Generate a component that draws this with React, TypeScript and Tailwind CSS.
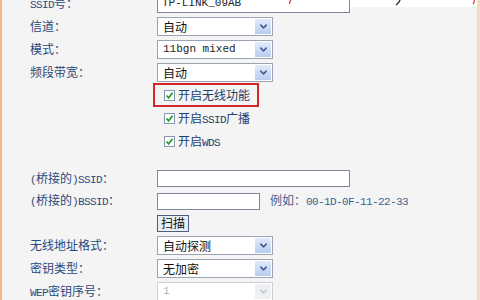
import { ChevronDown } from "lucide-react";

const cjk = { fontFamily: '"Noto Sans CJK SC", "Liberation Sans", sans-serif' };
const mono = { fontFamily: '"Liberation Mono", "DejaVu Sans Mono", monospace' };

// 半角字符按宋体宽度（约6px）显示
function Mixed({ text }: { text: string }) {
  const parts = text.match(/[\x20-\x7e]+|[^\x20-\x7e]+/g) || [];
  return (
    <>
      {parts.map((p, i) =>
        /^[\x20-\x7e]+$/.test(p) ? (
          <span key={i} className="text-[11px] tracking-[-0.6px]" style={mono}>
            {p}
          </span>
        ) : (
          <span key={i} style={cjk}>
            {p}
          </span>
        )
      )}
    </>
  );
}

function Label({ text }: { text: string }) {
  return (
    <div className="w-[127px] shrink-0 whitespace-nowrap text-[12px] text-[#2a4a7c]">
      <Mixed text={text} />
    </div>
  );
}

function Select({ value, disabled, latin }: { value: string; disabled?: boolean; latin?: boolean }) {
  return (
    <div
      className={
        "flex h-[19px] w-[116px] items-center border bg-white pl-[5px] pr-[1px] " +
        (disabled ? "border-[#cdd1d7]" : "border-[#9aa4b2]")
      }
    >
      <span
        className={
          "flex-1 truncate leading-none " +
          (disabled ? "text-[11px] text-[#b0b0b0]" : latin ? "text-[11px] text-[#222]" : "text-[12px] text-[#111]")
        }
        style={latin || disabled ? mono : cjk}
      >
        {value}
      </span>
      <span
        className={
          "flex h-[15px] w-[16px] items-center justify-center " +
          (disabled ? "bg-[#eef0f3]" : "bg-gradient-to-b from-[#e2ebfa] to-[#b9cbee]")
        }
      >
        <ChevronDown size={11} strokeWidth={3.2} className={disabled ? "text-[#c4c8ce]" : "text-[#3f5c8c]"} />
      </span>
    </div>
  );
}

function Input({ value, w }: { value?: string; w: string }) {
  return (
    <div
      className={"flex h-[17px] items-center border border-[#7d8898] bg-white px-[4px] text-[11px] leading-none text-[#222] " + w}
      style={mono}
    >
      {value}
    </div>
  );
}

function Check({ text }: { text: string }) {
  return (
    <div className="flex items-center gap-[3px]">
      <span className="flex h-[11px] w-[11px] items-center justify-center border border-[#8696b0] bg-white">
        <svg width="9" height="9" viewBox="0 0 9 9">
          <path d="M1.5 4.5 L3.6 6.8 L7.6 1.8" fill="none" stroke="#23a32a" strokeWidth="1.8" />
        </svg>
      </span>
      <span className="whitespace-nowrap text-[12px] leading-none text-[#1e3c6c]">
        <Mixed text={text} />
      </span>
    </div>
  );
}

export default function App() {
  return (
    <div className="relative h-[300px] w-[480px] overflow-hidden border-l-[2px] border-r-[3px] border-l-[#f5bb82] border-r-[#f7dcc2] bg-[#f4f4f4]">
      {/* 顶部注释残边 */}
      <div className="absolute left-[348px] top-0 h-[7px] w-[127px] bg-white" />
      <svg className="absolute left-0 top-0" width="480" height="6" viewBox="0 0 480 6">
        <path d="M289 0 Q287 2 288 4" fill="none" stroke="#d8353a" strokeWidth="1.2" />
        <path d="M398 0 Q397 3 394 5" fill="none" stroke="#333" strokeWidth="1.4" />
        <path d="M472 0 Q473 2 471 4" fill="none" stroke="#d8353a" strokeWidth="1.2" />
      </svg>

      <div className="flex flex-col pl-[28px]">
        <div className="-mt-[8px] flex h-[23px] items-center">
          <Label text="SSID号：" />
          <Input value="TP-LINK_09AB" w="w-[193px] h-[19px]" />
        </div>
        <div className="flex h-[23px] items-center">
          <Label text="信道：" />
          <Select value="自动" />
        </div>
        <div className="flex h-[23px] items-center">
          <Label text="模式：" />
          <Select value="11bgn mixed" latin />
        </div>
        <div className="flex h-[23px] items-center">
          <Label text="频段带宽：" />
          <Select value="自动" />
        </div>

        <div className="ml-[123px] mt-[-1px] flex h-[24px] w-[106px] items-center border-2 border-[#d3262c] pl-[9px]">
          <Check text="开启无线功能" />
        </div>
        <div className="ml-[134px] flex h-[23px] items-center">
          <Check text="开启SSID广播" />
        </div>
        <div className="ml-[134px] flex h-[23px] items-center">
          <Check text="开启WDS" />
        </div>

        <div className="mt-[14px] flex h-[23px] items-center">
          <Label text="(桥接的)SSID：" />
          <Input w="w-[193px]" />
        </div>
        <div className="flex h-[22px] items-center">
          <Label text="(桥接的)BSSID：" />
          <Input w="w-[103px]" />
          <span className="ml-[10px] whitespace-nowrap text-[12px] text-[#3d5f94]">
            <Mixed text="例如：00-1D-0F-11-22-33" />
          </span>
        </div>
        <div className="flex h-[22px] items-center pl-[127px]">
          <button
            className="flex h-[17px] w-[32px] items-center justify-center border border-[#4e5f7e] bg-[#e9edf4] text-[12px] leading-none text-[#111]"
            style={cjk}
          >
            扫描
          </button>
        </div>
        <div className="flex h-[23px] items-center">
          <Label text="无线地址格式：" />
          <Select value="自动探测" />
        </div>
        <div className="flex h-[23px] items-center">
          <Label text="密钥类型：" />
          <Select value="无加密" />
        </div>
        <div className="flex h-[23px] items-center">
          <Label text="WEP密钥序号：" />
          <Select value="1" disabled />
        </div>
      </div>
    </div>
  );
}
